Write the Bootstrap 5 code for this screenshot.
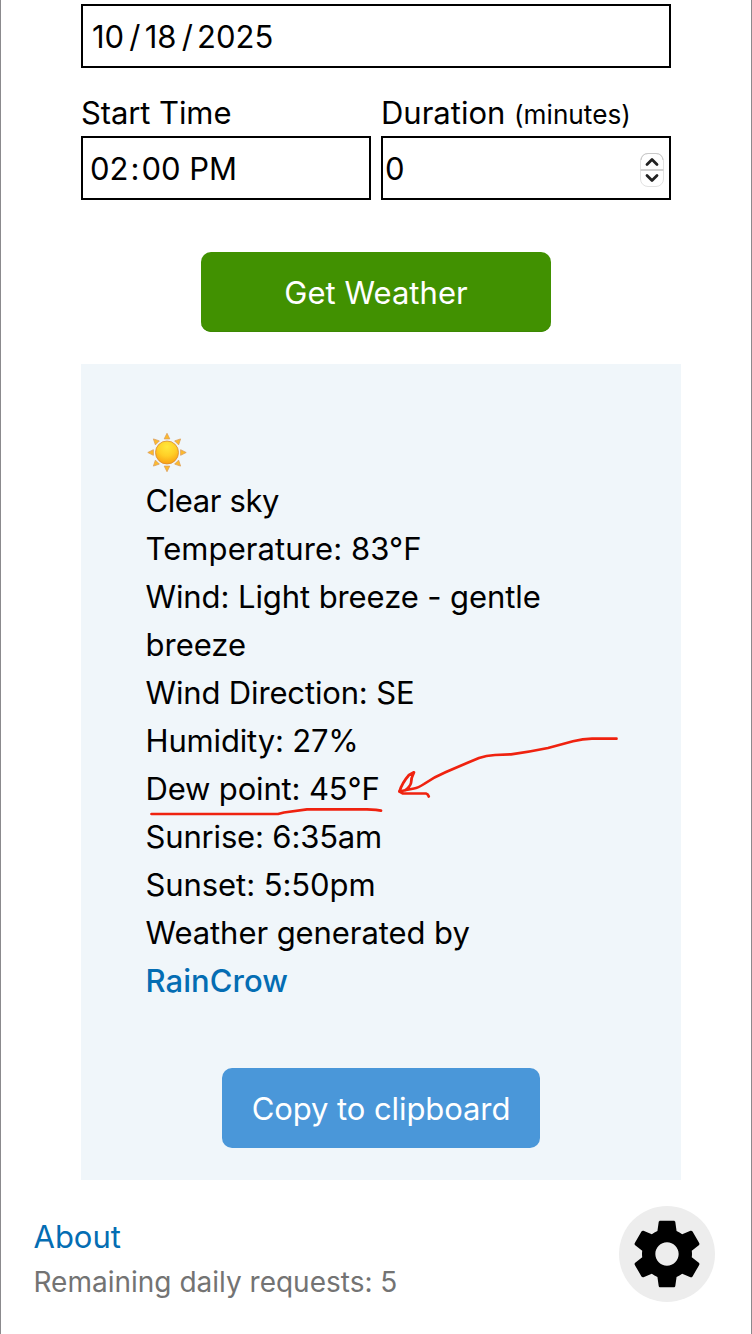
<!DOCTYPE html>
<html lang="en">
<head>
<meta charset="utf-8">
<meta name="viewport" content="width=device-width, initial-scale=1">
<title>RainCrow Weather</title>
<link href="https://cdn.jsdelivr.net/npm/bootstrap@5.3.0/dist/css/bootstrap.min.css" rel="stylesheet">
<style>
body{font-family:Inter,"Liberation Sans",sans-serif;font-size:31px;line-height:48px;color:#000;background:#fff}
.page{height:1334px;border:solid #8b8a8d;border-width:0 1px;padding-top:4px;overflow:hidden}
.form-area{width:590px;margin-left:80px}
.field{height:64px;border:2px solid #000;padding:2px 9px 0 7px}
.field-date{padding-left:9px}
.field-num{padding:2px 4px 0 2px}
.labels{height:42px;margin-top:25px;margin-bottom:1px}
.pair{gap:10px}
.labels label{line-height:40px}
.sl{margin:0 4.200px 0 5.200px}
.co{margin:0 2px}
.t-start{letter-spacing:-.1px}
.unit{font-size:26.200px}
.spin{margin-top:2px}
.btn-weather{width:350px;height:80px;margin-top:52px;border-radius:10px;background:#419101;color:#fff;box-shadow:inset 0 -1px #3c8803}
.btn-weather,.btn-copy{font-size:31px;border:0;padding:2px 0 0}
.t-get{letter-spacing:.05px}
.t-copy{letter-spacing:-.08px}
.result{width:600px;height:816px;margin:32px 0 0 80px;padding:65px 65px 65px 64.500px;background:#f0f6fa}
.btn-copy{width:318px;height:80px;margin:63px 0 0 76.500px;border-radius:10px;background:#4a97d9;color:#fff}
.brand-link{color:#046db3;text-decoration:none}
.sun{display:block;margin-left:1.500px}
.l1{letter-spacing:-.4px}
.l2{letter-spacing:.09px}
.l3{letter-spacing:-.09px}
.l5{letter-spacing:-.15px}
.l6,.l7,.l8{letter-spacing:-.16px}
.l9,.l10{letter-spacing:-.07px}
.l11{letter-spacing:.06px}
.ink{left:0;top:0;pointer-events:none}
.page-foot{padding:26px 36px 0 32.500px}
.foot-text{padding-top:7px}
.remain{font-size:28px;line-height:42px;color:#737373}
.gear{width:96px;height:96px;background:#ededed}
</style>
</head>
<body>
<main class="page">
  <form class="form-area">
    <div class="field field-date d-flex align-items-center"><span class="t-date">10<span class="sl">/</span>18<span class="sl">/</span>2025</span></div>
    <div class="d-flex labels pair">
      <label class="w-50 t-start">Start Time</label>
      <label class="w-50 text-nowrap"><span class="t-dur">Duration</span> <span class="unit">(minutes)</span></label>
    </div>
    <div class="d-flex pair">
      <div class="field w-50 d-flex align-items-center"><span class="t-time">02<span class="co">:</span>00 PM</span></div>
      <div class="field field-num w-50 d-flex align-items-center justify-content-between"><span>0</span>
        <svg width="26" height="36" viewBox="0 0 26 36" class="spin"><rect x="1.500" y="1.500" width="23" height="33" rx="7.500" fill="#fff" stroke="#e2e2e2"/><path d="M2 8Q3 1.500 9 1.500H17Q23 1.500 24 8" fill="none" stroke="#c9c9c9"/><path d="M1.500 18h23" stroke="#d2d2d2" stroke-width="2"/><path d="M8 12.500l5-5 5 5M8 23.500l5 5 5-5" fill="none" stroke="#222" stroke-width="2.800" stroke-linecap="round" stroke-linejoin="round"/></svg>
      </div>
    </div>
    <div class="text-center"><button type="button" class="btn btn-weather"><span class="t-get">Get Weather</span></button></div>
  </form>
  <section class="result position-relative">
    <svg class="sun" width="40" height="48" viewBox="0 0 40 48">
      <defs><radialGradient id="disc" cx=".5" cy=".25" r=".8"><stop offset="0" stop-color="#ffe83c"/><stop offset=".5" stop-color="#ffcf27"/><stop offset="1" stop-color="#f99a10"/></radialGradient>
      <path id="ray" d="M17.200 9.900L20 4.300l2.800 5.600z"/></defs>
      <g fill="#fdbb2b" stroke="#dda05c" stroke-width=".8" stroke-linejoin="round">
        <use href="#ray"/><use href="#ray" transform="rotate(45 20 23.500)"/><use href="#ray" transform="rotate(90 20 23.500)"/><use href="#ray" transform="rotate(135 20 23.500)"/><use href="#ray" transform="rotate(180 20 23.500)"/><use href="#ray" transform="rotate(225 20 23.500)"/><use href="#ray" transform="rotate(270 20 23.500)"/><use href="#ray" transform="rotate(315 20 23.500)"/>
      </g>
      <circle cx="20" cy="23.500" r="11.500" fill="url(#disc)" stroke="#d98b35" stroke-width=".8"/>
    </svg>
    <div class="l1">Clear sky</div>
    <div class="l2">Temperature: 83°F</div>
    <div class="l3">Wind: Light breeze - gentle</div>
    <div class="l4">breeze</div>
    <div class="l5">Wind Direction: SE</div>
    <div class="l6">Humidity: 27%</div>
    <div class="l7">Dew point: 45°F</div>
    <div class="l8">Sunrise: 6:35am</div>
    <div class="l9">Sunset: 5:50pm</div>
    <div class="l10">Weather generated by</div>
    <div class="l11"><a class="brand-link fw-medium" href="#">RainCrow</a></div>
    <button type="button" class="btn btn-copy"><span class="t-copy">Copy to clipboard</span></button>
    <svg class="ink position-absolute" width="600" height="816" viewBox="81 364 600 816" fill="none" stroke="#ef220f" stroke-width="2.700" stroke-linecap="round" stroke-linejoin="round">
      <path d="M151.500 814H278L284 812.500 307 809.300H367L376 809.800 381 810.700"/>
      <path d="M616.500 738.700H592Q583 738.800 573 741.300L548 748Q530 751.800 511 754.300L495 755Q486 755.500 479 758L467 763 446 772Q434 777 424 784 418 788 414 788.500L405 790.300 399.500 791.500Q402 783 409 775L414 772.300Q411 778 411 783 410 787 405 790.300"/>
      <path d="M399.500 791.500L403 793.500H426Q428 794 428.800 796.500"/>
    </svg>
  </section>
  <footer class="page-foot d-flex justify-content-between align-items-start">
    <div class="foot-text"><div><a class="brand-link t-about" href="#">About</a></div><div class="remain">Remaining daily requests: 5</div></div>
    <div class="gear rounded-circle d-flex align-items-center justify-content-center"><svg width="80" height="80" viewBox="0 0 24 24"><path d="M19.430 12.980c.04-.32.07-.64.07-.98s-.03-.66-.07-.98l2.110-1.650c.19-.15.24-.42.12-.64l-2-3.460c-.12-.22-.39-.3-.61-.22l-2.490 1c-.52-.4-1.080-.73-1.690-.98l-.38-2.650C14.460 2.180 14.250 2 14 2h-4c-.25 0-.46.18-.49.42l-.38 2.650c-.61.25-1.170.59-1.690.98l-2.490-1c-.23-.09-.49 0-.61.22l-2 3.460c-.13.22-.07.49.12.64l2.110 1.650c-.04.32-.07.65-.07.98s.03.66.07.98l-2.110 1.650c-.19.15-.24.42-.12.64l2 3.460c.12.22.39.3.61.22l2.490-1c.52.4 1.080.73 1.690.98l.38 2.650c.03.24.24.42.49.42h4c.25 0 .46-.18.49-.42l.38-2.650c.61-.25 1.170-.59 1.690-.98l2.490 1c.23.09.49 0 .61-.22l2-3.460c.12-.22.07-.49-.12-.64l-2.110-1.650zM12 15.500c-1.930 0-3.500-1.570-3.500-3.500s1.570-3.500 3.500-3.500 3.500 1.570 3.500 3.500-1.570 3.500-3.500 3.500z"/></svg></div>
  </footer>
</main>
<script src="https://cdn.jsdelivr.net/npm/bootstrap@5.3.0/dist/js/bootstrap.bundle.min.js"></script>
</body>
</html>
